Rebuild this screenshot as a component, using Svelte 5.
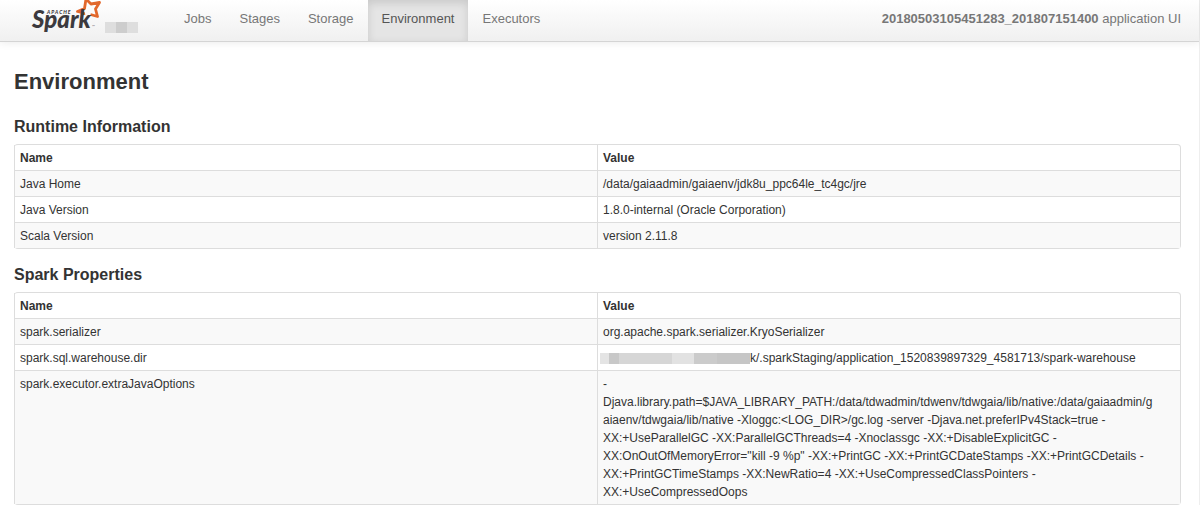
<script>
  const tabs = ['Jobs', 'Stages', 'Storage', 'Environment', 'Executors'];
  let active = $state('Environment');

  const appName = '20180503105451283_201807151400';

  // long JVM flags break where the value wraps on '-' or mid-path
  const javaOptions = [
    '-',
    'Djava.library.path=$JAVA_LIBRARY_PATH:/data/tdwadmin/tdwenv/tdwgaia/lib/native:/data/gaiaadmin/g',
    'aiaenv/tdwgaia/lib/native -Xloggc:<LOG_DIR>/gc.log -server -Djava.net.preferIPv4Stack=true -',
    'XX:+UseParallelGC -XX:ParallelGCThreads=4 -Xnoclassgc -XX:+DisableExplicitGC -',
    'XX:OnOutOfMemoryError="kill -9 %p" -XX:+PrintGC -XX:+PrintGCDateStamps -XX:+PrintGCDetails -',
    'XX:+PrintGCTimeStamps -XX:NewRatio=4 -XX:+UseCompressedClassPointers -',
    'XX:+UseCompressedOops'
  ].join('\n');

  const sections = [
    {
      title: 'Runtime Information',
      rows: [
        { name: 'Java Home', value: '/data/gaiaadmin/gaiaenv/jdk8u_ppc64le_tc4gc/jre' },
        { name: 'Java Version', value: '1.8.0-internal (Oracle Corporation)' },
        { name: 'Scala Version', value: 'version 2.11.8' }
      ]
    },
    {
      title: 'Spark Properties',
      rows: [
        { name: 'spark.serializer', value: 'org.apache.spark.serializer.KryoSerializer' },
        {
          name: 'spark.sql.warehouse.dir',
          masked: true,
          value: 'k/.sparkStaging/application_1520839897329_4581713/spark-warehouse'
        },
        { name: 'spark.executor.extraJavaOptions', value: javaOptions }
      ]
    }
  ];

  function select(evt, tab) {
    evt.preventDefault();
    active = tab;
  }
</script>

<div class="page">
  <header class="navbar">
    <a class="brand" href="#home" aria-label="Apache Spark">
      <svg width="72" height="36" viewBox="0 0 72 36">
        <path d="M54 15 L53.500 13 L47.500 11.500 L54.500 8.500 L56 -1 L61 4 L69.500 2.500 L65.500 9 L67.500 16.500 L60.500 14.500" class="star" />
        <text x="17" y="14" class="apache">APACHE</text>
        <text x="2" y="28" class="spark">Spark</text>
        <text x="62" y="28" class="tm">™</text>
      </svg>
    </a>
    <span class="version"><i></i><i></i><i></i></span>
    <nav>
      {#each tabs as tab}
        <a href="#{tab.toLowerCase()}" class:active={active === tab} onclick={(e) => select(e, tab)}>{tab}</a>
      {/each}
    </nav>
    <p class="app"><strong>{appName}</strong> application UI</p>
  </header>

  <main>
    <h1>Environment</h1>
    {#each sections as section}
      <section>
        <h2>{section.title}</h2>
        <table>
          <thead>
            <tr><th>Name</th><th>Value</th></tr>
          </thead>
          <tbody>
            {#each section.rows as row}
              <tr>
                <td>{row.name}</td>
                <td>{#if row.masked}<span class="mask"></span>{/if}{row.value}</td>
              </tr>
            {/each}
          </tbody>
        </table>
      </section>
    {/each}
  </main>
</div>

<style>
  :global(body) {
    margin: 0;
    background: #fff;
  }
  .page {
    font-family: "Liberation Sans", Arial, sans-serif;
    font-size: 13px;
    line-height: 18px;
    color: #333;
    border-right: 1px solid #eee;
  }
  .navbar {
    display: flex;
    align-items: flex-start;
    height: 41px;
    padding: 0 18px 0 30px;
    border-bottom: 1px solid #d4d4d4;
    background: linear-gradient(#fff, #f0f0f0);
    box-shadow: 0 1px 8px rgba(0, 0, 0, 0.08);
  }
  .brand svg {
    display: block;
  }
  .star {
    fill: none;
    stroke: #e2682c;
    stroke-width: 2.8;
    stroke-linejoin: round;
  }
  .apache {
    font: italic 900 5px Lato, sans-serif;
    letter-spacing: 1px;
    fill: #3c3a3e;
  }
  .spark {
    font: italic 900 24px Lato, sans-serif;
    fill: #3c3a3e;
  }
  .tm {
    font: 4px Lato, sans-serif;
    fill: #777;
  }
  .version {
    display: flex;
    width: 33px;
    height: 11px;
    margin: 22px 0 0 3px;
  }
  .version i {
    flex: 1;
    background: #dedede;
  }
  .version i:nth-child(2) {
    background: #cdcdcd;
  }
  nav {
    display: flex;
    margin-left: 32px;
  }
  nav a {
    height: 31px;
    padding: 10px 14px 0;
    color: #777;
    text-decoration: none;
  }
  nav a.active {
    color: #555;
    background: #e5e5e5;
    box-shadow: inset 0 3px 8px rgba(0, 0, 0, 0.125);
  }
  .app {
    margin: 10px 0 0 auto;
    color: #777;
  }
  main {
    padding: 24px 18px 0 14px;
  }
  h1 {
    margin: 0 0 20px;
    font-size: 22px;
    line-height: 32px;
  }
  h2 {
    margin: 0 0 8px;
    font-size: 16px;
    line-height: 18px;
  }
  section + section {
    margin-top: 17px;
  }
  table {
    width: 100%;
    table-layout: fixed;
    border: 1px solid #ddd;
    border-left: 0;
    border-radius: 4px;
    border-spacing: 0;
    font-size: 12px;
  }
  th,
  td {
    padding: 4px 5px 3px;
    border-left: 1px solid #ddd;
    text-align: left;
    vertical-align: top;
    overflow-wrap: break-word;
    white-space: pre-line;
  }
  td {
    border-top: 1px solid #ddd;
  }
  tbody tr:nth-child(odd) td {
    background: #f9f9f9;
  }
  .mask {
    display: inline-block;
    width: 150px;
    height: 11px;
    margin-left: -3px;
    vertical-align: -2px;
    background: linear-gradient(90deg, #e4e4e4 0 6%, #c8c8c8 6% 13%, #d6d6d6 13% 48%, #e2e2e2 48% 63%, #cbcbcb 63% 78%, #c6c6c6 78%);
  }
</style>
